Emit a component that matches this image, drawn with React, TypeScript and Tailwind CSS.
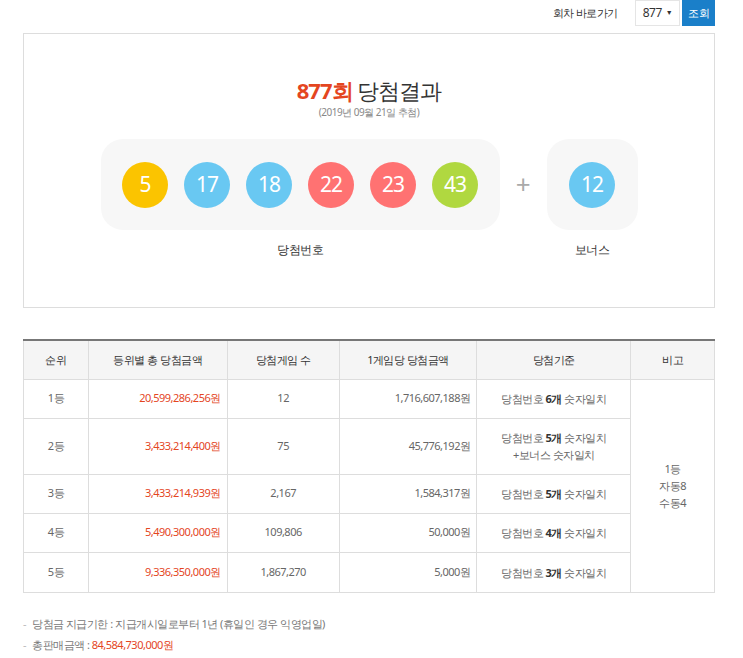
const balls = [
  { n: 5, c: "bg-[#fbc400]" },
  { n: 17, c: "bg-[#69c8f2]" },
  { n: 18, c: "bg-[#69c8f2]" },
  { n: 22, c: "bg-[#ff7272]" },
  { n: 23, c: "bg-[#ff7272]" },
  { n: 43, c: "bg-[#b0d840]" },
];

const rows = [
  { r: "1등", total: "20,599,286,256원", cnt: "12", per: "1,716,607,188원", k: "6", bonus: false, h: "h-[39px]" },
  { r: "2등", total: "3,433,214,400원", cnt: "75", per: "45,776,192원", k: "5", bonus: true, h: "h-[56px]" },
  { r: "3등", total: "3,433,214,939원", cnt: "2,167", per: "1,584,317원", k: "5", bonus: false, h: "h-[39px]" },
  { r: "4등", total: "5,490,300,000원", cnt: "109,806", per: "50,000원", k: "4", bonus: false, h: "h-[39px]" },
  { r: "5등", total: "9,336,350,000원", cnt: "1,867,270", per: "5,000원", k: "3", bonus: false, h: "h-[40px]" },
];

const Ball = ({ n, c }: { n: number; c: string }) => (
  <div className={`w-[46px] h-[46px] rounded-full ${c} flex items-center justify-center text-white text-[21px] tracking-[-1px]`}>{n}</div>
);

export default function App() {
  return (
    <div className="w-[743px] h-[658px] bg-white text-[#666] font-['Noto_Sans_CJK_KR','Noto_Sans',sans-serif] text-[11px] tracking-[-0.5px]">
      <div className="w-[692px] ml-[23px]">
        <div className="flex justify-end items-center h-[26px] gap-0">
          <span className="text-[11px] text-[#333] mr-[17px]">회차 바로가기</span>
          <div className="w-[45px] h-[26px] border border-[#e5e5e5] flex items-center justify-center gap-1 text-[12px] text-[#333] mr-[2px]">877 <span className="text-[7px]">▼</span></div>
          <div className="w-[33px] h-[26px] bg-[#1a7fc9] text-white flex items-center justify-center text-[11px]">조회</div>
        </div>
        <div className="mt-[7px] h-[275px] border border-[#ddd] flex flex-col items-center">
          <div className="mt-[42px] text-[22px] text-[#333] leading-[28px] tracking-[-1px]">
            <span className="text-[#e4461f] font-bold">877회</span> 당첨결과
          </div>
          <div className="mt-[1px] text-[10px] text-[#888]">(2019년 09월 21일 추첨)</div>
          <div className="mt-[19px] flex items-start">
            <div className="flex flex-col items-center">
              <div className="w-[399px] h-[91px] bg-[#f7f7f7] rounded-[22px] flex items-center justify-center gap-[16px]">
                {balls.map(b => <Ball key={b.n} {...b} />)}
              </div>
              <div className="mt-[11px] text-[12px] text-[#333]">당첨번호</div>
            </div>
            <div className="w-[47px] h-[91px] flex items-center justify-center text-[26px] text-[#aaa]">+</div>
            <div className="flex flex-col items-center">
              <div className="w-[91px] h-[91px] bg-[#f7f7f7] rounded-[22px] flex items-center justify-center">
                <Ball n={12} c="bg-[#69c8f2]" />
              </div>
              <div className="mt-[11px] text-[12px] text-[#333]">보너스</div>
            </div>
          </div>
        </div>
        <table className="mt-[31px] w-full border-collapse border-t-2 border-t-[#777] text-[11px]">
          <thead>
            <tr className="bg-[#f5f5f5] h-[39px] text-[#333]">
              {["순위", "등위별 총 당첨금액", "당첨게임 수", "1게임당 당첨금액", "당첨기준", "비고"].map((h, i) => (
                <th key={h} className={`font-normal border border-[#ddd] border-t-0 ${["w-[65px]", "w-[139px]", "w-[112px]", "w-[138px]", "w-[154px]", "w-[84px]"][i]}`}>{h}</th>
              ))}
            </tr>
          </thead>
          <tbody>
            {rows.map((r, i) => (
              <tr key={r.r} className={r.h}>
                <td className="border border-[#ddd] text-center">{r.r}</td>
                <td className="border border-[#ddd] text-right pr-[6px] text-[#e4461f]">{r.total}</td>
                <td className="border border-[#ddd] text-center">{r.cnt}</td>
                <td className="border border-[#ddd] text-right pr-[6px]">{r.per}</td>
                <td className="border border-[#ddd] text-center leading-[17px]">
                  당첨번호 <b className="text-[#333]">{r.k}개</b> 숫자일치
                  {r.bonus && <><br />+보너스 숫자일치</>}
                </td>
                {i === 0 && (
                  <td rowSpan={5} className="border border-[#ddd] text-center leading-[17px]">1등<br />자동8<br />수동4</td>
                )}
              </tr>
            ))}
          </tbody>
        </table>
        <ul className="mt-[20px] text-[11px] leading-[21px] text-[#777]">
          <li><span className="text-[#bbb] mr-[6px]">-</span>당첨금 지급기한 : 지급개시일로부터 1년 (휴일인 경우 익영업일)</li>
          <li><span className="text-[#bbb] mr-[6px]">-</span>총판매금액 : <span className="text-[#e4461f]">84,584,730,000원</span></li>
        </ul>
      </div>
    </div>
  );
}
